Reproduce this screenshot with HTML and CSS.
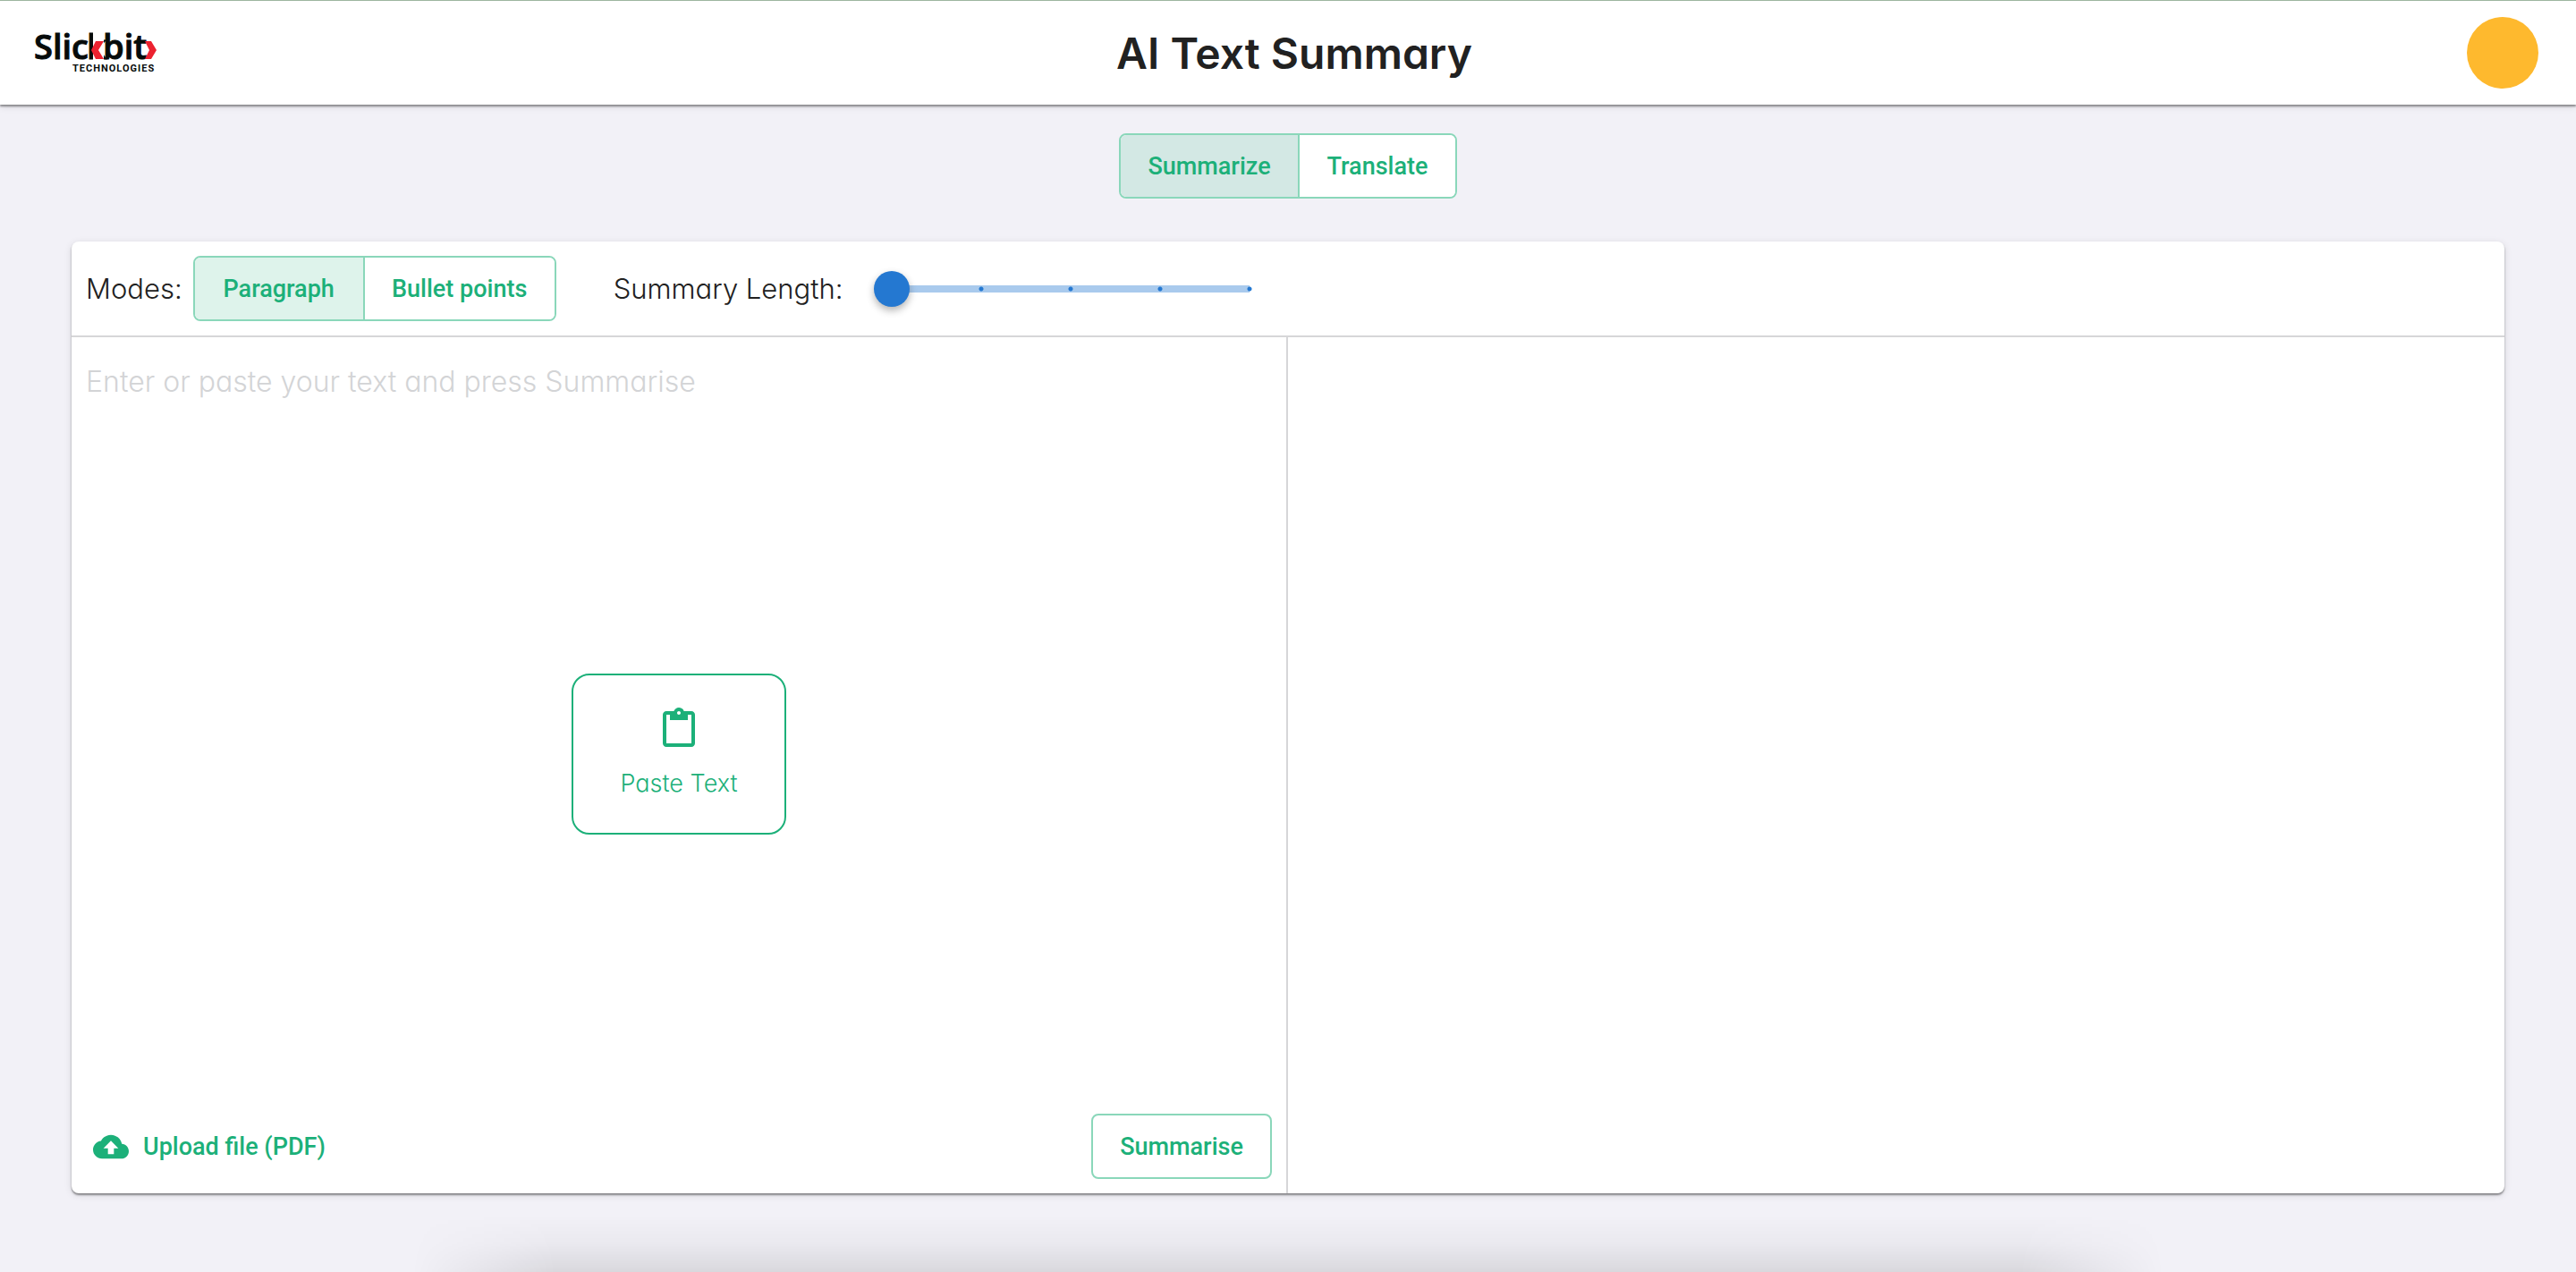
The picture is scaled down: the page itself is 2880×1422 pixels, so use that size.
FILE: index.html
```html
<!DOCTYPE html>
<html lang="en">
<head>
  <meta charset="utf-8">
  <meta name="viewport" content="width=device-width, initial-scale=1">
  <title>AI Text Summary</title>
  <link rel="stylesheet" href="styles.css">
</head>
<body class="app">
  <header class="topbar">
    <a class="topbar__logo" href="#" aria-label="Slickbit Technologies">
      <svg class="logo" viewBox="0 -12 140 70" width="140" height="70">
        <text class="logo__name" y="30"><tspan x="2">Slic</tspan><tspan x="61">k</tspan><tspan x="79">bit</tspan></text>
        <path class="logo__gap" d="M68 0h12v32H68z"/>
        <path class="logo__mark" d="M71 10h9l-6 10 6 10h-9l-5-10z"/>
        <path class="logo__mark" d="M126 10h7l6 10-6 10h-7l5-10z"/>
        <text class="logo__sub" x="45" y="44">TECHNOLOGIES</text>
      </svg>
    </a>
    <h1 class="topbar__title">AI Text Summary</h1>
    <button class="avatar" type="button" aria-label="Account"></button>
  </header>

  <main class="page">
    <div class="toggle toggle--main" role="group" aria-label="Tool">
      <button class="toggle__item toggle__item--on" type="button" aria-pressed="true">Summarize</button>
      <button class="toggle__item" type="button" aria-pressed="false">Translate</button>
    </div>

    <section class="card">
      <div class="options">
        <span class="options__label" id="modes">Modes:</span>
        <div class="toggle toggle--modes" role="group" aria-labelledby="modes">
          <button class="toggle__item toggle__item--on" type="button" aria-pressed="true">Paragraph</button>
          <button class="toggle__item" type="button" aria-pressed="false">Bullet points</button>
        </div>
        <label class="options__label options__label--length" for="length">Summary Length:</label>
        <input class="slider" id="length" type="range" min="0" max="4" step="1" value="0">
      </div>

      <div class="panes">
        <div class="pane pane--input">
          <textarea class="pane__text" aria-label="Text" placeholder="Enter or paste your text and press Summarise"></textarea>
          <div class="pane__overlay">
            <button class="paste" type="button">
              <svg class="paste__icon" viewBox="0 0 24 24" aria-hidden="true"><path d="M19 2h-4.180C14.400.840 13.300 0 12 0c-1.300 0-2.400.840-2.820 2H5c-1.100 0-2 .9-2 2v16c0 1.100.9 2 2 2h14c1.100 0 2-.9 2-2V4c0-1.100-.9-2-2-2zm-7 0c.550 0 1 .450 1 1s-.450 1-1 1-1-.450-1-1 .450-1 1-1zm7 18H5V4h2v3h10V4h2v16z"/></svg>
              Paste Text
            </button>
          </div>
          <div class="actions">
            <button class="upload" type="button">
              <svg class="upload__icon" viewBox="0 0 24 24" aria-hidden="true"><path d="M19.350 10.040C18.670 6.590 15.640 4 12 4 9.110 4 6.600 5.640 5.350 8.040 2.340 8.360 0 10.910 0 14c0 3.310 2.690 6 6 6h13c2.760 0 5-2.240 5-5 0-2.640-2.050-4.780-4.650-4.960zM14 13v4h-4v-4H7l5-5 5 5h-3z"/></svg>
              Upload file (PDF)
            </button>
            <button class="submit" type="button">Summarise</button>
          </div>
        </div>
        <div class="pane pane--output" aria-live="polite"></div>
      </div>
    </section>
  </main>
</body>
</html>
```
FILE: styles.css
```css
:root {
  --green: #1cb079;
  --green-line: #8ad7ba;
  --line: #d6d6d8;
  --ink: #212121;
  --page: #f2f1f7;
  --blue: #2478d1;
  --display: Inter, "Liberation Sans", sans-serif;
  --ui: Roboto, "Liberation Sans", sans-serif;
}

* { box-sizing: border-box; }

.app {
  position: relative;
  display: flex;
  flex-direction: column;
  min-height: 100vh;
  margin: 0;
  background: var(--page);
  color: var(--ink);
  font-family: var(--display);
  font-feature-settings: "cv11";
}

/* soft shade along the bottom edge of the window */
.app::after {
  content: "";
  position: absolute;
  left: 16%;
  right: 16%;
  bottom: 0;
  height: 64px;
  background: linear-gradient(to top, rgba(0, 0, 0, 0.1), rgba(0, 0, 0, 0.03) 50%, transparent);
  mask-image: linear-gradient(to right, transparent, #000 160px, #000 calc(100% - 160px), transparent);
  pointer-events: none;
}

button {
  font: inherit;
  font-feature-settings: inherit;
  color: inherit;
  cursor: pointer;
}

.topbar {
  display: grid;
  grid-template-columns: 1fr auto 1fr;
  align-items: center;
  padding: 18px 42px 18px 36px;
  border-top: 1px solid #9db59f;
  background: #fff;
  box-shadow: 0 2px 2px rgba(0, 0, 0, 0.4), 0 2px 8px rgba(0, 0, 0, 0.12);
}

.topbar__logo { display: flex; }

.topbar__title {
  margin: 0;
  padding: 2px 0 0 20px;
  font-size: 48px;
  font-weight: 600;
  line-height: 60px;
}

.logo__name {
  font-family: "Open Sans", sans-serif;
  font-size: 38px;
  font-weight: 600;
  fill: #060b0b;
  stroke: #060b0b;
  stroke-width: 1px;
}

.logo__sub {
  font-family: Roboto, sans-serif;
  font-size: 11px;
  font-weight: 700;
  letter-spacing: 1px;
  fill: #060b0b;
}

.logo__gap { fill: #fff; }
.logo__mark { fill: #ec2230; }

.avatar {
  justify-self: end;
  width: 80px;
  height: 80px;
  padding: 0;
  border: 0;
  border-radius: 50%;
  background: #feb92e;
}

.page {
  flex: 1;
  display: flex;
  flex-direction: column;
  gap: 48px;
  padding: 32px 80px 88px;
}

.toggle {
  display: grid;
  overflow: hidden;
  border: 2px solid var(--green-line);
  border-radius: 8px;
  background: #fff;
}

.toggle--main {
  align-self: center;
  grid-template-columns: 200px 174px;
}

.toggle--modes { grid-template-columns: 190px 212px; }

.toggle__item,
.submit {
  padding: 2px 0 0;
  border: 0;
  background: #fff;
  color: var(--green);
  font-family: var(--ui);
  font-size: 27px;
  font-weight: 500;
  line-height: 67px;
}

.toggle__item--on {
  border-right: 2px solid var(--green-line);
  background: #def3eb;
}

.toggle--main .toggle__item--on { background: #d3e8e4; }

.card {
  flex: 1;
  display: flex;
  flex-direction: column;
  overflow: hidden;
  border-radius: 8px;
  background: #fff;
  box-shadow: 0 2px 2px rgba(0, 0, 0, 0.4), 0 2px 8px rgba(0, 0, 0, 0.12);
}

.options {
  display: flex;
  align-items: center;
  padding: 16px;
  border-bottom: 2px solid var(--line);
  font-size: 31px;
  font-weight: 300;
  line-height: 40px;
}

.options__label { margin-right: 12px; }
.options__label--length { margin: 0 34px 0 64px; }

.slider {
  appearance: none;
  width: 440px;
  height: 40px;
  margin: 0;
  background:
    radial-gradient(circle, var(--blue) 2px, transparent 3px) 70px 50% / 100px 40px repeat-x,
    linear-gradient(#a9caed, #a9caed) 20px 50% / 400px 8px no-repeat;
}

.slider::-webkit-slider-thumb {
  appearance: none;
  width: 40px;
  height: 40px;
  border-radius: 50%;
  background: var(--blue);
  box-shadow: 0 4px 8px rgba(0, 0, 0, 0.3);
}

.panes {
  flex: 1;
  display: grid;
  grid-template-columns: 1fr 1fr;
}

.pane--input {
  position: relative;
  display: flex;
  flex-direction: column;
  border-right: 2px solid var(--line);
}

.pane__text {
  flex: 1;
  padding: 30px 16px;
  border: 0;
  outline: 0;
  resize: none;
  background: none;
  color: var(--ink);
  font: 300 32px/40px var(--display);
  font-feature-settings: inherit;
}

.pane__text::placeholder { color: #d3d4d6; }

/* paste prompt floats over the empty text area */
.pane__overlay {
  position: absolute;
  inset: 0 0 26px;
  display: grid;
  place-items: center;
  pointer-events: none;
}

.paste {
  display: flex;
  flex-direction: column;
  align-items: center;
  justify-content: center;
  gap: 18px;
  width: 240px;
  height: 180px;
  border: 2px solid var(--green);
  border-radius: 20px;
  background: #fff;
  color: var(--green);
  font-size: 27px;
  font-weight: 300;
  line-height: 38px;
  pointer-events: auto;
}

.paste__icon {
  width: 48px;
  height: 48px;
  fill: currentColor;
}

.actions {
  position: relative;
  display: flex;
  align-items: center;
  justify-content: space-between;
  padding: 16px;
}

.upload {
  display: flex;
  align-items: center;
  gap: 16px;
  padding: 0 8px;
  border: 0;
  background: none;
  color: var(--green);
  font-family: var(--ui);
  font-size: 27px;
  font-weight: 500;
  line-height: 40px;
}

.upload__icon {
  width: 40px;
  height: 40px;
  fill: currentColor;
}

.submit {
  width: 202px;
  border: 2px solid var(--green-line);
  border-radius: 8px;
}
```
